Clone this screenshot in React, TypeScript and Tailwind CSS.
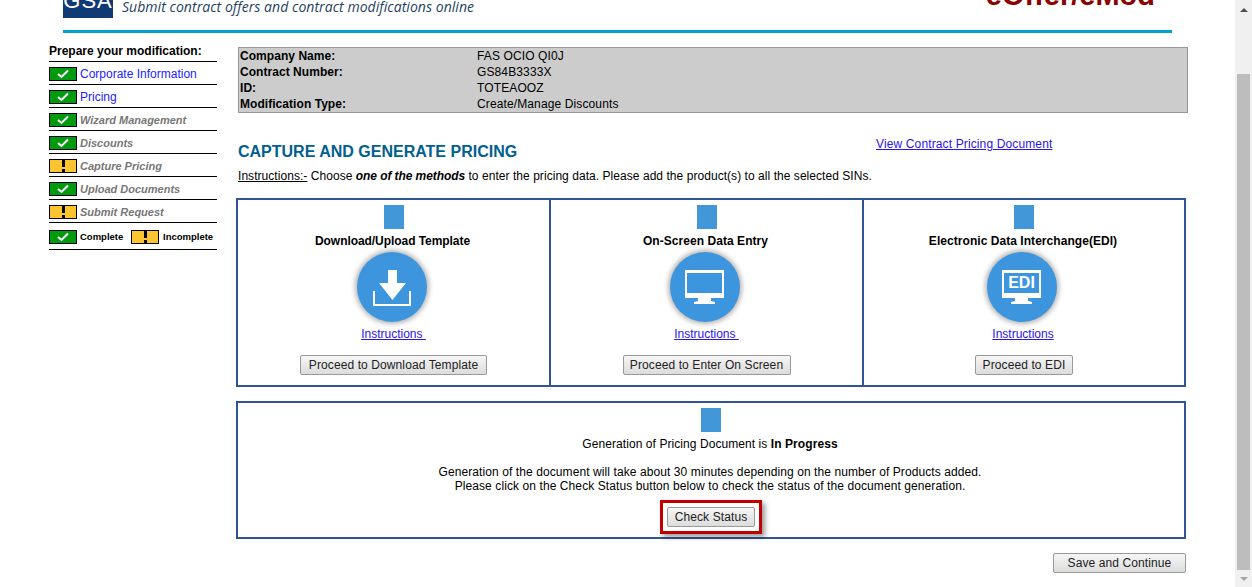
import React from "react";

const Check = () => (
  <span className="flex h-[14px] w-[28px] shrink-0 items-center justify-center border border-black bg-[#009a0e]">
    <svg width="14" height="10" viewBox="0 0 14 10" fill="none">
      <path d="M2 5 L5.5 8 L12 1.5" stroke="#fff" strokeWidth="2" />
    </svg>
  </span>
);

const Warn = () => (
  <span className="flex h-[14px] w-[28px] shrink-0 items-center justify-center border border-black bg-[#fdc432]">
    <svg width="3" height="12" viewBox="0 0 3 12">
      <rect x="0" y="0" width="3" height="7" fill="#000" />
      <rect x="0" y="9" width="3" height="3" fill="#000" />
    </svg>
  </span>
);

const steps: [string, boolean, boolean][] = [
  ["Corporate Information", true, true],
  ["Pricing", true, true],
  ["Wizard Management", true, false],
  ["Discounts", true, false],
  ["Capture Pricing", false, false],
  ["Upload Documents", true, false],
  ["Submit Request", false, false],
];

const Btn = ({ children, className = "" }: { children: React.ReactNode; className?: string }) => (
  <button className={"h-[20px] rounded-[2px] border border-[#999] bg-gradient-to-b from-[#f6f6f6] to-[#dcdcdc] text-[12px] leading-[18px] tracking-[0.1px] text-[#222] " + className}>
    {children}
  </button>
);

const Cell = ({
  title,
  titleClass,
  icon,
  button,
  btnClass,
  className,
  link,
  linkClass = "",
}: {
  title: string;
  titleClass: string;
  icon: React.ReactNode;
  button: string;
  btnClass: string;
  className: string;
  link: string;
  linkClass?: string;
}) => (
  <div className={"flex flex-col items-center pt-[5px] " + className}>
    <div className="h-[24px] w-[20px] bg-[#4297d9]" />
    <div className={"mr-[2px] mt-[5px] text-[12px] font-bold leading-[14px] text-black " + titleClass}>{title}</div>
    <div className="mr-[4px] mt-[4px] flex h-[70px] w-[70px] items-center justify-center rounded-full bg-[#3d96dd] shadow-[0_0_5px_2px_rgba(0,0,0,0.3)]">
      {icon}
    </div>
    <a className={"mt-[5px] whitespace-pre text-[12px] leading-[14px] text-[#2a14f0] underline " + linkClass}>{link}</a>
    <Btn className={"mt-[14px] " + btnClass}>{button}</Btn>
  </div>
);

const Monitor = ({ edi }: { edi?: boolean }) => (
  <div className="relative h-[34px] w-[40px]">
    <svg width="40" height="34" viewBox="0 0 40 34">
      <path fillRule="evenodd" d="M0 0H39V28H26V31L30 32V34H9V32L13 31V28H0ZM2 3V23H37V3Z" fill="#fff" />
    </svg>
    {edi && (
      <span className="absolute left-[2px] top-[3px] flex h-[20px] w-[35px] items-center justify-center text-[16px] font-bold leading-none text-white">
        EDI
      </span>
    )}
  </div>
);

const Download = () => (
  <svg width="40" height="38" viewBox="0 0 40 38" className="mt-[2px]">
    <path d="M16 1H25V14H34L20.5 31L7 14H16Z" fill="#fff" />
    <path d="M2 22V36H38V22" fill="none" stroke="#fff" strokeWidth="2" />
  </svg>
);

export default function App() {
  return (
    <div className="flex h-[587px] w-full overflow-hidden bg-white font-['Liberation_Sans',Arial,sans-serif] text-[12px] text-black">
      <div className="min-w-0 flex-1">
        <header className="ml-[63px] flex h-[33px] w-[1109px] items-start justify-between overflow-hidden border-b-[3px] border-[#009fd4]">
          <div className="flex items-start">
            <div className="flex h-[18px] w-[50px] items-start justify-center overflow-hidden bg-[#0f3a73]">
              <span className="-mt-[10px] text-[22px] font-normal leading-[22px] tracking-[1px] text-white">GSA</span>
            </div>
            <span className="ml-[9px] font-['Open_Sans',sans-serif] text-[14px] italic leading-[14px] tracking-[0.05px] text-[#1f3f66]">
              Submit contract offers and contract modifications online
            </span>
          </div>
          <div className="mr-[17px] -mt-[20px] text-[29px] font-bold leading-[30px] text-[#8b0000]">eOffer/eMod</div>
        </header>

        <div className="flex">
          <aside className="ml-[49px] mt-[11px] w-[168px] shrink-0">
            <div className="h-[18px] border-b border-black text-[12px] font-bold leading-[14px]">
              Prepare your modification:
            </div>
            {steps.map(([label, ok, active]) => (
              <div key={label} className="flex h-[23px] items-center border-b border-black pt-[1px]">
                {ok ? <Check /> : <Warn />}
                <span
                  className={
                    active
                      ? "ml-[3px] text-[12px] leading-[14px] text-[#2222ff]"
                      : "ml-[3px] mt-[1px] text-[11px] font-bold italic leading-[14px] text-[#777]"
                  }
                >
                  {label}
                </span>
              </div>
            ))}
            <div className="flex h-[27px] items-center border-b border-black pt-[1px]">
              <Check />
              <span className="ml-[3px] w-[51px] text-[9.5px] font-bold leading-none">Complete</span>
              <Warn />
              <span className="ml-[4px] text-[9.5px] font-bold leading-none">Incomplete</span>
            </div>
          </aside>

          <main className="ml-[19px] w-[950px] shrink-0">
            <div className="ml-[2px] mt-[14px] grid h-[66px] w-[950px] grid-cols-[237px_1fr] border border-[#999] bg-[#cccccc] pl-[1px] text-[12px] leading-[16px] tracking-[0.12px]">
              <b className="tracking-[0.05px]">Company Name:</b>
              <span>FAS OCIO QI0J</span>
              <b className="tracking-[0.05px]">Contract Number:</b>
              <span>GS84B3333X</span>
              <b className="tracking-[0.05px]">ID:</b>
              <span>TOTEAOOZ</span>
              <b className="tracking-[0.05px]">Modification Type:</b>
              <span>Create/Manage Discounts</span>
            </div>

            <div className="relative ml-[2px] h-[85px]">
              <a className="absolute left-[638px] top-[24px] text-[12px] leading-[14px] tracking-[0.13px] text-[#2a14f0] underline">
                View Contract Pricing Document
              </a>
              <h1 className="pt-[30px] text-[16px] font-bold leading-[18px] text-[#00608f]">CAPTURE AND GENERATE PRICING</h1>
              <p className="mt-[8px] text-[12px] leading-[14px] tracking-[0.05px]">
                <span className="underline">Instructions:-</span> Choose <b className="tracking-[-0.08px]"><i>one of the methods</i></b> to enter the pricing data. Please add the product(s) to all the selected SINs.
              </p>
            </div>

            <div className="flex h-[189px] w-[950px] border-2 border-[#2f5597]">
              <Cell
                className="w-[311px]"
                title="Download/Upload Template"
                titleClass="tracking-[-0.06px]"
                icon={<Download />}
                link="Instructions "
                button="Proceed to Download Template"
                btnClass="w-[187px]"
              />
              <Cell
                className="w-[313px] border-l-2 border-[#2f5597]"
                title="On-Screen Data Entry"
                titleClass="tracking-[0.05px]"
                icon={<Monitor />}
                link="Instructions "
                button="Proceed to Enter On Screen"
                btnClass="w-[168px]"
              />
              <Cell
                className="flex-1 border-l-2 border-[#2f5597]"
                title="Electronic Data Interchange(EDI)"
                titleClass="tracking-[0.05px]"
                icon={<Monitor edi />}
                link="Instructions"
                linkClass="mr-[2px]"
                button="Proceed to EDI"
                btnClass="w-[98px]"
              />
            </div>

            <div className="mt-[14px] flex h-[138px] w-[950px] flex-col items-center border-2 border-[#2f5597] pt-[5px]">
              <div className="h-[24px] w-[20px] bg-[#4297d9]" />
              <p className="mr-[2px] mt-[5px] leading-[14px] tracking-[0.07px]">
                Generation of Pricing Document is <b>In Progress</b>
              </p>
              <p className="mr-[2px] mt-[14px] text-center leading-[14px] tracking-[0.09px]">
                Generation of the document will take about 30 minutes depending on the number of Products added.
                <br />
                Please click on the Check Status button below to check the status of the document generation.
              </p>
              <div className="mt-[7px] border-[3px] border-[#c00000] px-[4px] py-[4px] shadow-[3px_3px_5px_rgba(0,0,0,0.4)]">
                <Btn className="block w-[88px]">Check Status</Btn>
              </div>
            </div>

            <div className="mt-[14px] flex justify-end">
              <Btn className="w-[133px]">Save and Continue</Btn>
            </div>
          </main>
        </div>
      </div>

      <div className="flex h-full w-[17px] shrink-0 flex-col items-center bg-[#f0f0f0]">
        <div className="flex h-[17px] w-full items-center justify-center pt-[2px]">
          <span className="h-0 w-0 border-x-[4px] border-b-[4px] border-x-transparent border-b-[#505050]" />
        </div>
        <div className="mt-[57px] w-[13px] flex-1 bg-[#bdbdbd]" />
        <div className="flex h-[17px] w-full items-center justify-center">
          <span className="h-0 w-0 border-x-[4px] border-t-[4px] border-x-transparent border-t-[#a3a3a3]" />
        </div>
      </div>
    </div>
  );
}
